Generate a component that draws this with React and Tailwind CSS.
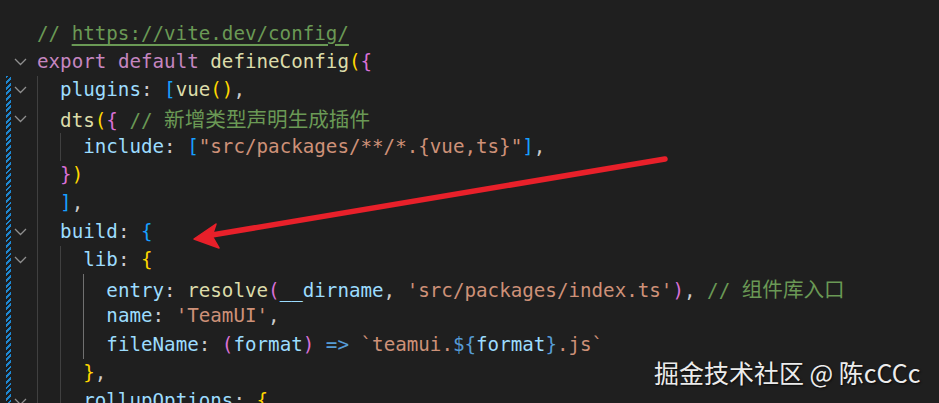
import React from "react";

const C = {
  cm: "text-[#6a9955]",
  kw: "text-[#c586c0]",
  fn: "text-[#dcdcaa]",
  pr: "text-[#9cdcfe]",
  st: "text-[#ce9178]",
  p: "text-[#cccccc]",
  b1: "text-[#ffd700]",
  b2: "text-[#da70d6]",
  b3: "text-[#179fff]",
  op: "text-[#569cd6]",
};

const lines = [
  { indent: 0, fold: false, tokens: [["// ", "cm"], ["https://vite.dev/config/", "url"]] },
  { indent: 0, fold: true, tokens: [["export", "kw"], [" ", "p"], ["default", "kw"], [" ", "p"], ["defineConfig", "fn"], ["(", "b1"], ["{", "b2"]] },
  { indent: 2, fold: true, tokens: [["plugins", "pr"], [": ", "p"], ["[", "b3"], ["vue", "fn"], ["()", "b1"], [",", "p"]] },
  { indent: 2, fold: true, tokens: [["dts", "fn"], ["(", "b1"], ["{", "b2"], [" ", "p"], ["// ", "cm"], ["新增类型声明生成插件", "cjk"]] },
  { indent: 4, fold: false, tokens: [["include", "pr"], [": ", "p"], ["[", "b3"], ['"src/packages/**/*.{vue,ts}"', "st"], ["]", "b3"], [",", "p"]] },
  { indent: 2, fold: false, tokens: [["}", "b2"], [")", "b1"]] },
  { indent: 2, fold: false, tokens: [["]", "b3"], [",", "p"]] },
  { indent: 2, fold: true, tokens: [["build", "pr"], [": ", "p"], ["{", "b3"]] },
  { indent: 4, fold: true, tokens: [["lib", "pr"], [": ", "p"], ["{", "b1"]] },
  { indent: 6, fold: false, active: true, tokens: [["entry", "pr"], [": ", "p"], ["resolve", "fn"], ["(", "b2"], ["__dirname", "pr"], [", ", "p"], ["'src/packages/index.ts'", "st"], [")", "b2"], [", ", "p"], ["// ", "cm"], ["组件库入口", "cjk"]] },
  { indent: 6, fold: false, active: true, tokens: [["name", "pr"], [": ", "p"], ["'TeamUI'", "st"], [",", "p"]] },
  { indent: 6, fold: false, active: true, tokens: [["fileName", "pr"], [": ", "p"], ["(", "b2"], ["format", "pr"], [")", "b2"], [" ", "p"], ["=>", "op"], [" ", "p"], ["`teamui.", "st"], ["${", "op"], ["format", "pr"], ["}", "op"], [".js`", "st"]] },
  { indent: 4, fold: false, tokens: [["}", "b1"], [",", "p"]] },
  { indent: 4, fold: true, tokens: [["rollupOptions", "pr"], [": ", "p"], ["{", "b1"]] },
];

function Token({ text, kind }) {
  if (kind === "url") {
    return (
      <span className="text-[#6a9955] underline decoration-[#6a9955] decoration-[1.5px] underline-offset-[4px]">
        {text}
      </span>
    );
  }
  if (kind === "cjk") {
    return (
      <span className="text-[#6a9955] text-[20.6px] [font-family:'Noto_Sans_CJK_SC',sans-serif]">
        {text}
      </span>
    );
  }
  return <span className={C[kind]}>{text}</span>;
}

function Chevron() {
  return (
    <svg width="13" height="8" viewBox="0 0 13 8" fill="none">
      <polyline points="1,1 6.5,6.5 12,1" stroke="#8f8f8f" strokeWidth="1.3" />
    </svg>
  );
}

export default function App() {
  const LH = "h-[28.3px]";
  return (
    <div className="relative w-[939px] h-[403px] overflow-hidden bg-[#1f1f1f] [font-family:'DejaVu_Sans_Mono','Noto_Sans_CJK_SC',monospace] text-[19.2px]">
      <div className="flex pt-[19.5px]">
        {/* gutter */}
        <div className="flex pl-[6px] w-[37px] shrink-0">
          <div className="w-[5px] mt-[56.6px] h-[400px] bg-[repeating-linear-gradient(135deg,#1e87d0_0px,#1e87d0_2px,#1f1f1f_2px,#1f1f1f_4px)]" />
          <div className="flex flex-col ml-[3px] w-[13px]">
            {lines.map((l, i) => (
              <div key={i} className={`${LH} flex items-center justify-center`}>
                {l.fold ? <Chevron /> : null}
              </div>
            ))}
          </div>
        </div>
        {/* code */}
        <div className="flex flex-col">
          {lines.map((l, i) => {
            const guides = [];
            for (let g = 0; g < l.indent; g += 2) {
              const isActive = l.active && g === 4;
              guides.push(
                <div
                  key={g}
                  className={`w-[23.12px] shrink-0 border-l ${isActive ? "border-[#707070]" : "border-[#404040]"}`}
                />
              );
            }
            return (
              <div key={i} className={`${LH} flex items-stretch whitespace-pre leading-[28.3px]`}>
                {guides}
                <div className="whitespace-pre">
                  {l.tokens.map(([t, k], j) => (
                    <Token key={j} text={t} kind={k} />
                  ))}
                </div>
              </div>
            );
          })}
        </div>
      </div>

      {/* annotation arrow */}
      <svg className="absolute inset-0 pointer-events-none" width="939" height="403" viewBox="0 0 939 403">
        <line x1="665" y1="159" x2="212" y2="235" stroke="#e8202a" strokeWidth="5.5" strokeLinecap="round" />
        <polygon points="194,239 216,224 212,236 219,248" fill="#e8202a" stroke="#e8202a" strokeWidth="1.5" strokeLinejoin="round" />
      </svg>

      {/* watermark */}
      <div className="absolute left-[654px] top-[360px] leading-[25px] text-[25px] text-[#ececec] [font-family:'Noto_Sans_CJK_SC',sans-serif] [text-shadow:1px_1px_2px_rgba(0,0,0,0.7)] whitespace-pre">
        掘金技术社区 @ 陈cCCc
      </div>
    </div>
  );
}
